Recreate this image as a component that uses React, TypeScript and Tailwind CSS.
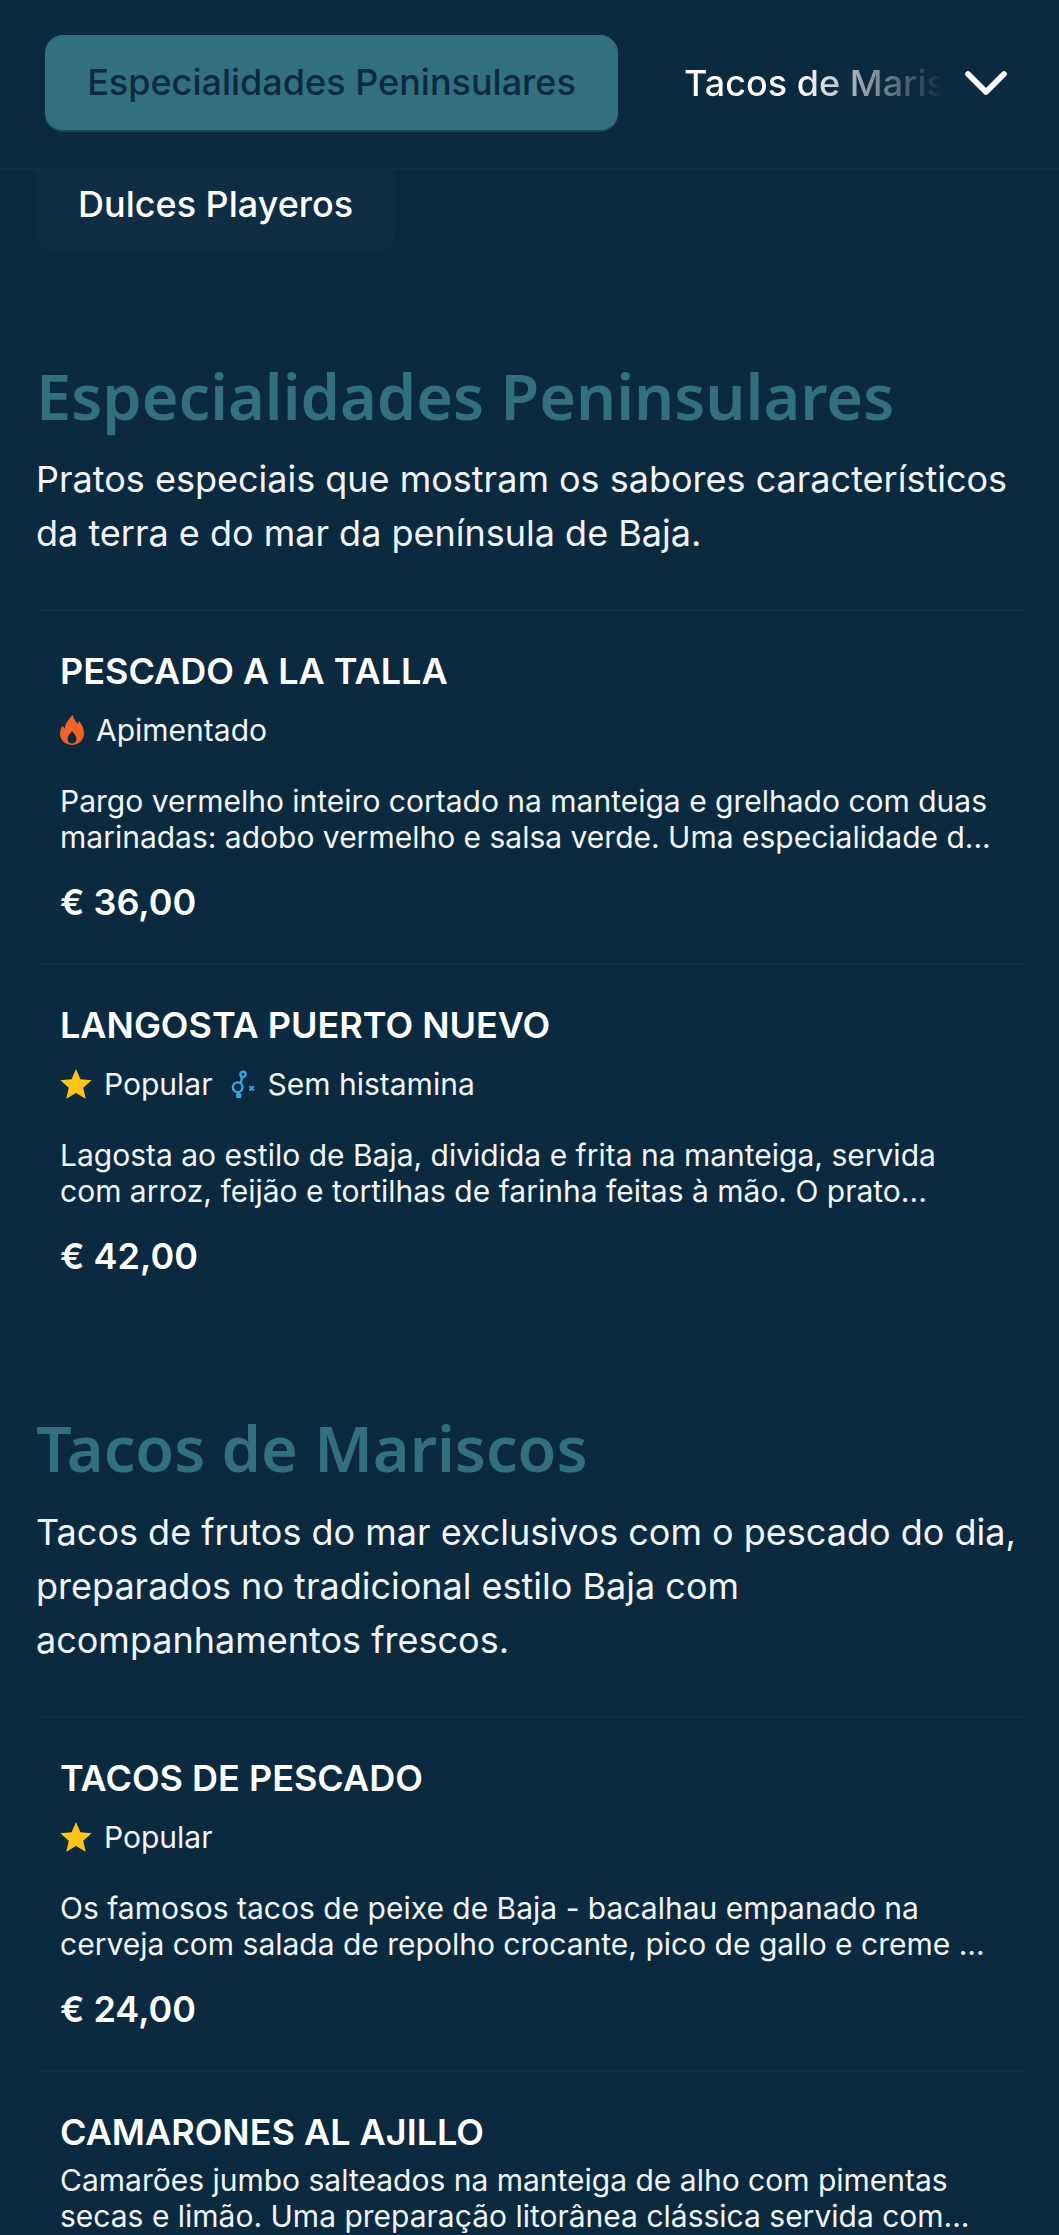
import { ChevronDown } from "lucide-react";

const Flame = () => (
  <svg width="24" height="30" viewBox="0 0 24 30" className="shrink-0">
    <path
      fillRule="evenodd"
      fill="#f4622a"
      d="M13 0c.5 4 2.500 6 4.500 9 .8-1 1.200-2 1.300-3.200C21.500 9 24 13 24 18.500 24 25 18.500 30 12 30S0 25 0 18.500C0 15 1.300 12.500 3 10.500c.3 1.500.9 2.500 1.800 3.200C5 8.500 8.500 4 13 0Zm-1 16c-2 2.700-4.500 5-4.500 8.200 0 2.700 2 4.300 4.500 4.300s4.500-1.600 4.500-4.300c0-3.200-2.500-5.500-4.500-8.200Z"
    />
  </svg>
);

const NoHistamine = () => (
  <svg width="28" height="28" viewBox="0 0 26 26" fill="none" stroke="#38a9dc" strokeWidth="2.2" className="shrink-0">
    <circle cx="14" cy="4" r="2.5" />
    <path d="M13 6.500 12 12" />
    <circle cx="9" cy="16" r="4.500" />
    <path d="M9 20.500V22" />
    <circle cx="10" cy="24" r="1.500" />
    <path d="m20 15 4 4m0-4-4 4" strokeWidth="1.800" />
  </svg>
);

const PopularStar = () => (
  <svg width="32" height="32" viewBox="0 0 30 30" className="shrink-0">
    <path fill="#fcc419" d="M15 1l4.200 9.600 10.500 1-7.900 7 2.300 10.300L15 23.500l-9.100 5.400 2.300-10.300-7.900-7 10.500-1Z" />
  </svg>
);

interface Tag {
  icon: "flame" | "star" | "histamine";
  label: string;
}

interface Dish {
  name: string;
  tags?: Tag[];
  lines: string[];
  price?: string;
}

function DishRow({ dish }: { dish: Dish }) {
  return (
    <div className="border-t-2 border-[#10304a] pl-[20px] pr-2 h-[354px] pt-[30px] ml-[4px] mr-[34px]">
      <h3 className="text-[36px] leading-[60px] font-semibold text-white whitespace-nowrap">{dish.name}</h3>
      {dish.tags && (
        <div className="flex items-center h-[36px] mt-[11px] text-[30px] text-[#f1f5f9]">
          {dish.tags.map(t => (
            <span key={t.label} className="flex items-center gap-[12px] mr-[15px]">
              {t.icon === "flame" && <Flame />}
              {t.icon === "star" && <PopularStar />}
              {t.icon === "histamine" && <NoHistamine />}
              {t.label}
            </span>
          ))}
        </div>
      )}
      <p className={`text-[30px] leading-[36px] text-[#f1f5f9] whitespace-nowrap ${dish.tags ? "mt-[35px]" : ""}`}>
        {dish.lines.map(l => <span key={l} className="block">{l}</span>)}
      </p>
      {dish.price && <div className="text-[36px] leading-[50px] font-semibold text-white mt-[22px]">{dish.price}</div>}
    </div>
  );
}

const especialidades: Dish[] = [
  {
    name: "PESCADO A LA TALLA",
    tags: [{ icon: "flame", label: "Apimentado" }],
    lines: [
      "Pargo vermelho inteiro cortado na manteiga e grelhado com duas",
      "marinadas: adobo vermelho e salsa verde. Uma especialidade d...",
    ],
    price: "€ 36,00",
  },
  {
    name: "LANGOSTA PUERTO NUEVO",
    tags: [{ icon: "star", label: "Popular" }, { icon: "histamine", label: "Sem histamina" }],
    lines: [
      "Lagosta ao estilo de Baja, dividida e frita na manteiga, servida",
      "com arroz, feijão e tortilhas de farinha feitas à mão. O prato...",
    ],
    price: "€ 42,00",
  },
];

const tacos: Dish[] = [
  {
    name: "TACOS DE PESCADO",
    tags: [{ icon: "star", label: "Popular" }],
    lines: [
      "Os famosos tacos de peixe de Baja - bacalhau empanado na",
      "cerveja com salada de repolho crocante, pico de gallo e creme ...",
    ],
    price: "€ 24,00",
  },
  {
    name: "CAMARONES AL AJILLO",
    lines: [
      "Camarões jumbo salteados na manteiga de alho com pimentas",
      "secas e limão. Uma preparação litorânea clássica servida com...",
    ],
  },
];

export default function App() {
  return (
    <div className="w-[1059px] h-[2235px] overflow-hidden bg-[#0b2a3f] font-['Inter',sans-serif]">
      <header className="h-[170px] border-b-2 border-[#10304a] flex items-center pl-[45px] pb-[2px]">
        <div className="w-[573px] h-[97px] rounded-[18px] bg-[#33707f] border-b-2 border-[#17495a] flex items-center justify-center text-[36px] font-medium text-[#0b2a3f] whitespace-nowrap">
          Especialidades Peninsulares
        </div>
        <div className="ml-[66px] w-[260px] pr-[4px] text-[36px] text-transparent whitespace-nowrap overflow-hidden bg-[linear-gradient(90deg,#ffffff_45%,#0b2a3f_100%)] bg-clip-text font-medium">
          Tacos de Mariscos
        </div>
        <ChevronDown size={72} strokeWidth={1.9} className="text-white ml-[6px]" />
      </header>
      <div className="w-[359px] h-[82px] rounded-b-[18px] ml-[36px] bg-[#0f2e44] flex items-center pl-[42px] pb-[14px] text-[36px] font-medium text-white">
        Dulces Playeros
      </div>
      <section className="mt-[106px] pl-[36px]">
        <h2 className="text-[63px] leading-[76px] font-semibold text-[#33707f] font-['Noto_Sans',sans-serif]">Especialidades Peninsulares</h2>
        <p className="text-[36px] leading-[54px] text-[#f1f5f9] mt-[18px] mb-[49px]">
          Pratos especiais que mostram os sabores característicos<br />da terra e do mar da península de Baja.
        </p>
      </section>
      {especialidades.map(d => <div key={d.name} className="ml-[36px]"><DishRow dish={d} /></div>)}
      <section className="mt-[93px] pl-[36px]">
        <h2 className="text-[63px] leading-[76px] font-semibold text-[#33707f] font-['Noto_Sans',sans-serif]">Tacos de Mariscos</h2>
        <p className="text-[36px] leading-[54px] text-[#f1f5f9] mt-[19px] mb-[49px]">
          Tacos de frutos do mar exclusivos com o pescado do dia,<br />preparados no tradicional estilo Baja com<br />acompanhamentos frescos.
        </p>
      </section>
      {tacos.map(d => <div key={d.name} className="ml-[36px]"><DishRow dish={d} /></div>)}
    </div>
  );
}
